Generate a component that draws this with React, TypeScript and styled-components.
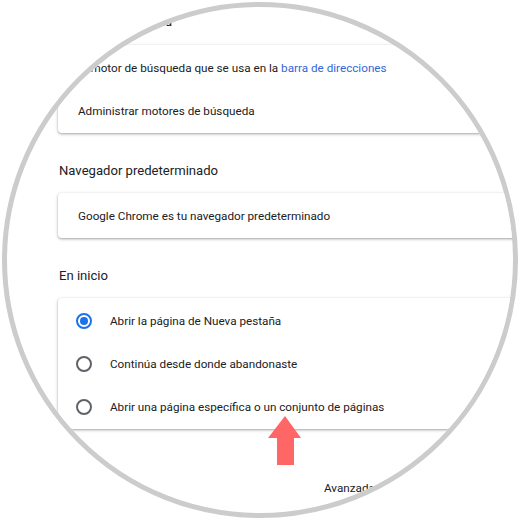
import React from "react";
import styled, { createGlobalStyle } from "styled-components";

const Global = createGlobalStyle`
  html, body { margin: 0; padding: 0; background: #ffffff; }
  body { font-family: Roboto, "Noto Sans", Arial, sans-serif; }
`;

const Page = styled.div`
  position: relative;
  width: 520px;
  height: 520px;
  background: #ffffff;
  overflow: hidden;
`;

const Lens = styled.div`
  box-sizing: border-box;
  width: 516px;
  height: 516px;
  margin: 2px 0 0 2px;
  border-radius: 50%;
  border: 5px solid #cccccc;
  overflow: hidden;
  background: #ffffff;
`;

const Column = styled.div`
  width: 620px;
  padding: 3px 0 0 51px;
  box-sizing: content-box;
  color: #202124;
  font-size: 11.7px;
`;

const Heading = styled.div<{ $first?: boolean }>`
  height: 24px;
  line-height: 24px;
  font-size: 13.1px;
  margin: ${(p) => (p.$first ? "0 0 11px 1px" : "26px 0 10px 1px")};
  color: #202124;
`;

const Card = styled.div`
  background: #ffffff;
  border-radius: 4px;
  box-shadow: 0 1px 2px rgba(60, 64, 67, 0.3), 0 1px 3px 1px rgba(60, 64, 67, 0.15);
  padding: 1px 0;
`;

const Row = styled.div`
  height: 43px;
  display: flex;
  align-items: center;
  padding-left: 20px;
  line-height: 20px;
`;

const RadioRow = styled.div`
  height: 43px;
  display: flex;
  align-items: center;
  gap: 18px;
  padding-left: 18px;
`;

const Radio = styled.span<{ $on?: boolean }>`
  box-sizing: border-box;
  width: 16px;
  height: 16px;
  border-radius: 50%;
  border: 2px solid ${(p) => (p.$on ? "#1a73e8" : "#5f6368")};
  display: flex;
  align-items: center;
  justify-content: center;
  &::after {
    content: "";
    width: 8px;
    height: 8px;
    border-radius: 50%;
    background: ${(p) => (p.$on ? "#1a73e8" : "transparent")};
  }
`;

const Link = styled.span`
  color: #3367d6;
`;

const Advanced = styled.div`
  margin: 49px 0 0 266px;
  line-height: 20px;
  color: #202124;
`;

const Arrow = styled.svg`
  position: absolute;
  left: 268px;
  top: 416px;
`;

export default function App() {
  return (
    <Page>
      <Global />
      <Lens>
        <Column>
          <Heading $first>Motor de búsqueda</Heading>
          <Card>
            <Row>
              El motor de búsqueda que se usa en la&nbsp;<Link>barra de direcciones</Link>
            </Row>
            <Row>Administrar motores de búsqueda</Row>
          </Card>
          <Heading>Navegador predeterminado</Heading>
          <Card>
            <Row>Google Chrome es tu navegador predeterminado</Row>
          </Card>
          <Heading>En inicio</Heading>
          <Card>
            <RadioRow>
              <Radio $on />
              Abrir la página de Nueva pestaña
            </RadioRow>
            <RadioRow>
              <Radio />
              Continúa desde donde abandonaste
            </RadioRow>
            <RadioRow>
              <Radio />
              Abrir una página específica o un conjunto de páginas
            </RadioRow>
          </Card>
          <Advanced>Avanzada</Advanced>
        </Column>
      </Lens>
      <Arrow width="34" height="50" viewBox="0 0 34 50">
        <polygon points="17,0 33,22 26,22 26,49 9,49 9,22 0,22" fill="#ff6666" />
      </Arrow>
    </Page>
  );
}
